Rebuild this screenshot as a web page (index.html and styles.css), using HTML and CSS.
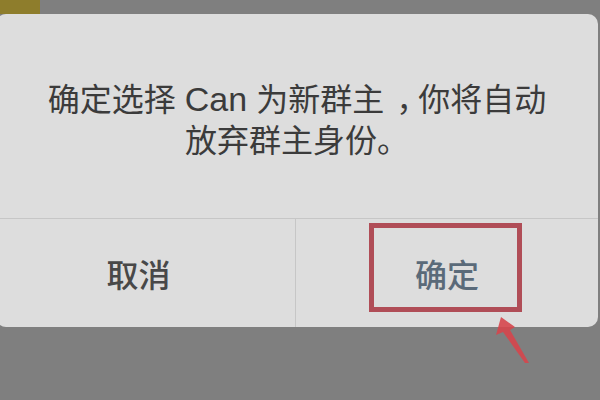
FILE: index.html
```html
<!DOCTYPE html>
<html lang="zh-CN">
<head>
<meta charset="utf-8">
<title>确定选择新群主</title>
<link rel="stylesheet" href="styles.css">
</head>
<body>
<div class="topbar"><div class="tab"></div></div>
<div class="dialog">
  <div class="message">
    <p class="text">确定选择 <span class="latin">Can</span> 为新群主<span class="comma">，</span>你将自动<br>放弃群主身份。</p>
  </div>
  <div class="actions">
    <div class="btn btn-cancel">取消</div>
    <div class="btn btn-ok">确定</div>
  </div>
</div>
<div class="highlight"></div>
<svg class="arrow" width="50" height="60" viewBox="490 312 50 60" xmlns="http://www.w3.org/2000/svg">
  <polygon points="501,317 515,327 510,330 529,363 525,363 503,332 496,335" fill="#d6464c" fill-opacity="0.9"/>
</svg>
</body>
</html>
```

FILE: styles.css
```css
html, body {
  margin: 0;
  padding: 0;
}
body {
  width: 600px;
  height: 400px;
  background: #7f7f7f;
  position: relative;
  overflow: hidden;
  font-family: "Noto Sans CJK SC", "Liberation Sans", sans-serif;
}
.topbar {
  height: 14px;
}
.tab {
  width: 40px;
  height: 14px;
  background: #8e7d2c;
}
.dialog {
  margin-left: -4px;
  width: 602px;
  height: 313px;
  background: #dddddd;
  border-radius: 10px;
  display: flex;
  flex-direction: column;
}
.message {
  height: 205px;
  box-sizing: border-box;
  padding-top: 4px;
  border-bottom: 1px solid #c6c6c6;
  display: flex;
  align-items: center;
  justify-content: center;
}
.text {
  margin: 0;
  font-size: 32px;
  line-height: 39px;
  color: #3b3b3b;
  text-align: center;
}
.latin {
  font-family: "Liberation Sans", sans-serif;
  font-size: 34px;
  padding: 0 2px;
}
.comma {
  margin-left: 12px;
  letter-spacing: -10px;
}
.actions {
  flex: 1;
  display: flex;
}
.btn {
  display: flex;
  align-items: center;
  justify-content: center;
  font-size: 32px;
  font-weight: 500;
}
.btn-cancel {
  flex: 0 0 300px;
  box-sizing: border-box;
  padding-right: 14px;
  border-right: 1px solid #c6c6c6;
  color: #484848;
}
.btn-ok {
  flex: 1;
  color: #5a6a79;
}
.highlight {
  position: absolute;
  left: 369px;
  top: 223px;
  width: 153px;
  height: 89px;
  box-sizing: border-box;
  border: 5px solid #b04d57;
}
.arrow {
  position: absolute;
  left: 490px;
  top: 312px;
}
```
